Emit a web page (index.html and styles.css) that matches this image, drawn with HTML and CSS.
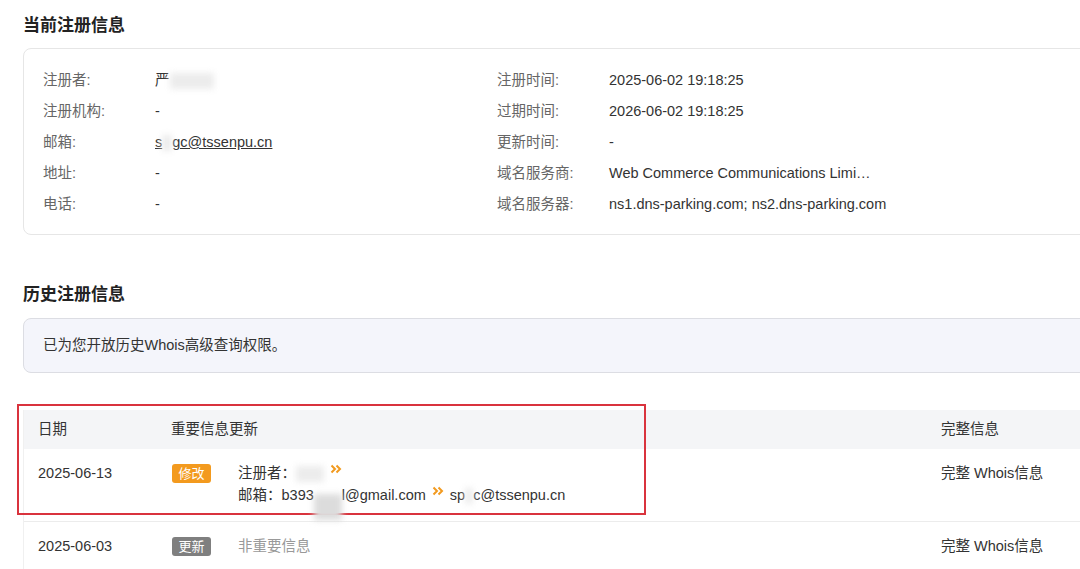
FILE: index.html
```html
<!DOCTYPE html>
<html lang="zh-CN">

<head>
    <meta charset="UTF-8">
    <meta name="viewport" content="width=device-width, initial-scale=1.0">
    <title>Whois 注册信息</title>
    <link rel="stylesheet" href="styles.css">
</head>

<body>
    <div class="page">
        <h2 class="section-title">当前注册信息</h2>
        <div class="info-card">
            <div class="info-col left">
                <div class="info-row"><span class="label">注册者:</span><span class="value">严<span class="redact w40"></span></span></div>
                <div class="info-row"><span class="label">注册机构:</span><span class="value">-</span></div>
                <div class="info-row"><span class="label">邮箱:</span><span class="value link">s<span class="redact w10"></span>gc@tssenpu.cn</span></div>
                <div class="info-row"><span class="label">地址:</span><span class="value">-</span></div>
                <div class="info-row"><span class="label">电话:</span><span class="value">-</span></div>
            </div>
            <div class="info-col">
                <div class="info-row"><span class="label">注册时间:</span><span class="value">2025-06-02 19:18:25</span></div>
                <div class="info-row"><span class="label">过期时间:</span><span class="value">2026-06-02 19:18:25</span></div>
                <div class="info-row"><span class="label">更新时间:</span><span class="value">-</span></div>
                <div class="info-row"><span class="label">域名服务商:</span><span class="value">Web Commerce Communications Limi…</span></div>
                <div class="info-row"><span class="label">域名服务器:</span><span class="value">ns1.dns-parking.com; ns2.dns-parking.com</span></div>
            </div>
        </div>

        <h2 class="section-title history">历史注册信息</h2>
        <div class="notice">已为您开放历史Whois高级查询权限。</div>

        <div class="history-table">
            <div class="mark"></div>
            <div class="t-row t-head">
                <div class="c-date">日期</div>
                <div class="c-main">重要信息更新</div>
                <div class="c-full">完整信息</div>
            </div>
            <div class="t-row">
                <div class="c-date">2025-06-13</div>
                <div class="c-main">
                    <span class="badge modify">修改</span>
                    <div class="changes">
                        <div>注册者：<span class="redact w28"></span>
                            <svg class="arrow" viewBox="0 0 12 10" width="12" height="10"><path d="M1.5 1.5L5 5L1.5 8.5M6.5 1.5L10 5L6.5 8.5" fill="none" stroke="#f29a1f" stroke-width="2"/></svg>
                        </div>
                        <div>邮箱：b393<span class="redact w28 low"></span>l@gmail.com
                            <svg class="arrow" viewBox="0 0 12 10" width="12" height="10"><path d="M1.5 1.5L5 5L1.5 8.5M6.5 1.5L10 5L6.5 8.5" fill="none" stroke="#f29a1f" stroke-width="2"/></svg>
                            sp<span class="redact w8"></span>c@tssenpu.cn
                        </div>
                    </div>
                </div>
                <div class="c-full">完整 Whois信息</div>
            </div>
            <div class="t-row">
                <div class="c-date">2025-06-03</div>
                <div class="c-main">
                    <span class="badge minor">更新</span>
                    <div class="changes muted">非重要信息</div>
                </div>
                <div class="c-full">完整 Whois信息</div>
            </div>
        </div>
    </div>
</body>

</html>
```

FILE: styles.css
```css
body {
    margin: 0;
    background: #fff;
    font-family: "Liberation Sans", Arial, "Noto Sans CJK SC", sans-serif;
    font-size: 14.5px;
    color: #333;
    overflow: hidden;
}

.page {
    width: 1120px;
    padding: 14px 0 0 23px;
}

.section-title {
    margin: 0;
    font-size: 17px;
    line-height: 24px;
    font-weight: bold;
    color: #222;
}

.section-title.history {
    margin-top: 48px;
}

.info-card {
    display: flex;
    margin-top: 10px;
    padding: 16px 19px 14px;
    border: 1px solid #e6e6e6;
    border-radius: 8px;
}

.info-col.left {
    width: 454px;
}

.info-row {
    display: flex;
    line-height: 31px;
    height: 31px;
}

.label {
    width: 112px;
    color: #666;
}

.value {
    color: #333;
    white-space: nowrap;
}

.value.link {
    text-decoration: underline;
}

.redact {
    display: inline-block;
    height: 16px;
    vertical-align: middle;
    background: #ececec;
    filter: blur(3px);
}

.w40 { width: 44px; }
.w28 { width: 28px; }
.w10 { width: 10px; }
.w8 { width: 8px; }

.redact.low {
    height: 26px;
    margin: -2px 0 -12px;
    vertical-align: -8px;
    background: #dcdcdc;
}

.notice {
    margin-top: 11px;
    height: 53px;
    line-height: 53px;
    padding-left: 19px;
    background: #f4f5fb;
    border: 1px solid #dcdde3;
    border-radius: 8px;
    color: #333;
}

.history-table {
    position: relative;
    margin-top: 37px;
    border-left: 1px solid #f0f0f0;
}

.mark {
    position: absolute;
    left: -7px;
    top: -6px;
    width: 625px;
    height: 107px;
    border: 2px solid #d9333d;
    pointer-events: none;
}

.t-row {
    display: flex;
    padding: 13px 0 15px;
    line-height: 22px;
    border-bottom: 1px solid #ececec;
}

.t-head {
    padding: 8px 0 9px;
    background: #f4f5f7;
    border-bottom: none;
}

.c-date {
    width: 133px;
    padding-left: 14px;
}

.c-main {
    display: flex;
    width: 770px;
}

.c-full {
    white-space: nowrap;
}

.changes > div {
    height: 22px;
    white-space: nowrap;
}

.badge {
    flex: none;
    width: 39px;
    height: 19px;
    margin: 2px 27px 0 1px;
    border-radius: 3px;
    color: #fff;
    font-size: 13px;
    line-height: 19px;
    text-align: center;
}

.badge.modify {
    background: #f39a1e;
}

.badge.minor {
    background: #7f7f7f;
}

.muted {
    color: #999;
}

.arrow {
    vertical-align: 4px;
    margin: 0 2px;
}
```
